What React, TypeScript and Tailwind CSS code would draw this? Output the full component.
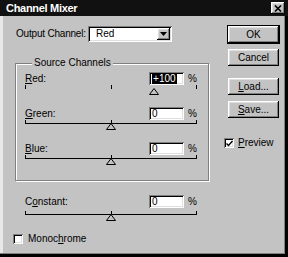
import React from "react";

const raised =
  "shadow-[inset_-1px_-1px_#000,inset_1px_1px_#fff,inset_-2px_-2px_#808080,inset_2px_2px_#dfdfdf]";
const sunken =
  "shadow-[inset_1px_1px_#808080,inset_-1px_-1px_#fff,inset_2px_2px_#000,inset_-2px_-2px_#dfdfdf]";

// slider runs -200..+200 over 172px
const Slider = ({ value, line = true }: { value: number; line?: boolean }) => {
  const x = ((value + 200) / 400) * 172;
  return (
    <div className="relative h-[8px] w-[172px]">
      {line && <div className="h-px w-full bg-black" />}
      <div className="absolute left-0 top-[-3px] h-[4px] w-px bg-black" />
      <div className="absolute left-[86px] top-[-3px] h-[4px] w-px bg-black" />
      <div className="absolute right-0 top-[-3px] h-[4px] w-px bg-black" />
      <svg
        className="absolute top-0"
        style={{ left: x - 5 }}
        width="10"
        height="7"
        viewBox="0 0 10 7"
      >
        <polygon points="5,0.5 9.5,6.5 0.5,6.5" fill="#c3c3c3" stroke="#000" strokeWidth="1" />
      </svg>
    </div>
  );
};

const Field = ({ value, selected }: { value: string; selected?: boolean }) => (
  <div className={`h-[13px] w-[35px] bg-white pl-[3px] leading-[13px] ${sunken}`}>
    <span className={selected ? "bg-black px-px text-white" : ""}>{value}</span>
  </div>
);

const Row = ({
  label,
  value,
  selected,
  gap,
  line,
}: {
  label: React.ReactNode;
  value: number;
  selected?: boolean;
  gap: string;
  line?: boolean;
}) => (
  <div>
    <div className="flex h-[13px] w-[172px] items-center justify-between">
      <span className="leading-[12px]">{label}</span>
      <div className="flex items-center gap-[4px]">
        <Field value={value > 0 ? `+${value}` : `${value}`} selected={selected} />
        <span>%</span>
      </div>
    </div>
    <div className={gap}>
      <Slider value={value} line={line} />
    </div>
  </div>
);

const Button = ({ children, isDefault }: { children: React.ReactNode; isDefault?: boolean }) => (
  <div
    className={`flex h-[17px] w-[51px] items-center justify-center bg-[#c3c3c3] ${
      isDefault ? "outline outline-1 outline-black" : ""
    } ${raised}`}
  >
    {children}
  </div>
);

const Check = ({ checked }: { checked?: boolean }) => (
  <div className={`flex h-[10px] w-[10px] items-center justify-center bg-white ${sunken}`}>
    {checked && (
      <svg width="7" height="7" viewBox="0 0 7 7">
        <path d="M0.5 3.5 L2.5 5.5 L6.5 1" fill="none" stroke="#000" strokeWidth="1.4" />
      </svg>
    )}
  </div>
);

export default function App() {
  return (
    <div
      className={`h-[257px] w-[288px] overflow-hidden bg-[#c3c3c3] font-['Liberation_Sans',Arial,sans-serif] text-[10px] leading-[12px] text-black shadow-[inset_-3px_-3px_#000,inset_-4px_-4px_#808080,inset_3px_0_#e8e8e8]`}
    >
      {/* title bar */}
      <div className="flex h-[16px] items-center justify-between bg-[#111] pl-[6px] pr-[3px]">
        <span className="text-[11px] font-bold tracking-[-0.3px] text-white">Channel Mixer</span>
        <div className={`flex h-[12px] w-[14px] items-center justify-center bg-[#c3c3c3] ${raised}`}>
          <svg width="8" height="7" viewBox="0 0 8 7">
            <path d="M1 0.5 L7 6.5 M7 0.5 L1 6.5" stroke="#000" strokeWidth="1.6" />
          </svg>
        </div>
      </div>

      <div className="flex pl-[15px] pt-[10px]">
        {/* left column */}
        <div className="w-[194px]">
          <div className="flex h-[16px] items-center">
            <span className="w-[73px] whitespace-nowrap pl-px tracking-[-0.2px]">Output Channel:</span>
            <div className={`flex h-[16px] w-[84px] items-center justify-between bg-white pl-[8px] pr-[2px] ${sunken}`}>
              <span>Red</span>
              <div className={`flex h-[12px] w-[13px] items-center justify-center bg-[#c3c3c3] ${raised}`}>
                <svg width="7" height="4" viewBox="0 0 7 4">
                  <polygon points="0,0 7,0 3.5,4" fill="#000" />
                </svg>
              </div>
            </div>
          </div>

          {/* Source Channels group */}
          <div className="relative mt-[21px] h-[118px] w-[194px] border border-[#808080] pl-[9px] pt-[8px] shadow-[1px_1px_#fff,inset_1px_1px_#fff]">
            <span className="absolute left-[16px] top-[-7px] bg-[#c3c3c3] px-[2px]">Source Channels</span>
            <div className="h-[35px]">
              <Row label={<><u>R</u>ed:</>} value={100} selected gap="mt-[3px]" line={false} />
            </div>
            <div className="h-[35px]">
              <Row label={<><u>G</u>reen:</>} value={0} gap="mt-[3px]" />
            </div>
            <div className="h-[35px]">
              <Row label={<><u>B</u>lue:</>} value={0} gap="mt-[3px]" />
            </div>
          </div>

          <div className="mt-[14px] pl-[10px]">
            <Row label={<>C<u>o</u>nstant:</>} value={0} gap="mt-[6px]" />
          </div>

          <div className="-ml-[2px] mt-[11px] flex items-center gap-[5px]">
            <Check />
            <span>
              Monoc<u>h</u>rome
            </span>
          </div>
        </div>

        {/* right column */}
        <div className="ml-[19px] flex flex-col">
          <Button isDefault>OK</Button>
          <div className="mt-[6px]">
            <Button>Cancel</Button>
          </div>
          <div className="mt-[12px]">
            <Button>
              <u>L</u>oad...
            </Button>
          </div>
          <div className="mt-[6px]">
            <Button>
              <u>S</u>ave...
            </Button>
          </div>
          <div className="-ml-[4px] mt-[19px] flex items-center gap-[4px]">
            <Check checked />
            <span>
              <u>P</u>review
            </span>
          </div>
        </div>
      </div>
    </div>
  );
}
